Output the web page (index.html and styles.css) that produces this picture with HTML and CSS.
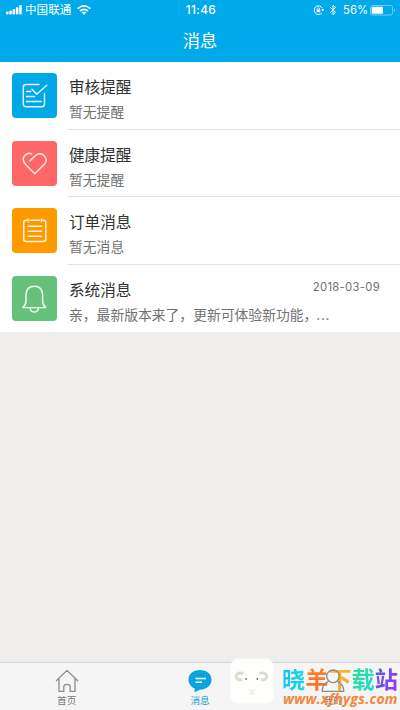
FILE: index.html
```html
<!DOCTYPE html>
<html lang="zh-CN">
<head>
<meta charset="utf-8">
<title>消息</title>
<link rel="stylesheet" href="styles.css">
</head>
<body>
<div class="app">
  <header class="header">
    <div class="status">
      <div class="status-left">
        <svg class="signal" width="16" height="10" viewBox="0 0 16 10" fill="#fff"><rect x="0" y="6.5" width="2.5" height="3" rx=".8"/><rect x="3.3" y="5.5" width="2.5" height="4" rx=".8"/><rect x="6.6" y="4" width="2.5" height="5.5" rx=".8"/><rect x="9.9" y="2.2" width="2.5" height="7.3" rx=".8"/><rect x="13.2" y="0" width="2.5" height="9.5" rx=".8"/></svg>
        <span class="carrier">中国联通</span>
        <svg width="14" height="10" viewBox="0 0 14 10" fill="none" stroke="#fff" stroke-width="1.7"><path d="M.7 3.6Q7-1.8 13.3 3.6M3 6Q7 2.6 11 6"/><path d="M4.7 7.4Q7 5.6 9.3 7.4L7 9.8Z" fill="#fff" stroke="none"/></svg>
      </div>
      <span class="time">11:46</span>
      <div class="status-right">
        <svg width="12" height="10" viewBox="0 0 12 10" fill="none" stroke="#fff"><path d="M8.9 7.8A4.3 4.3 0 1 1 9.3 3.2"/><path d="M8.2 4.1h3L9.7 6.4Z" fill="#fff" stroke="none"/><rect x="3.6" y="4.5" width="3.6" height="2.7" fill="#fff" stroke="none"/><path d="M4.3 4.6V3.4Q5.4 2 6.5 3.4V4.6" stroke-width=".8"/></svg>
        <svg class="bluetooth" width="8" height="12" viewBox="0 0 8 12" fill="none" stroke="#fff"><path d="M1 3.2 6.6 8.4 4 11V1L6.6 3.6 1 8.8"/></svg>
        <span class="percent">56%</span>
        <svg width="26" height="11" viewBox="0 0 26 11"><rect x=".5" y=".5" width="22" height="9.5" rx="2" fill="none" stroke="#6bd0f5"/><rect x="1.7" y="1.7" width="11.3" height="7.1" rx=".8" fill="#fff"/><path d="M24 3.5q2 1.7 0 3.5z" fill="#8bdaf7"/></svg>
      </div>
    </div>
    <h1 class="title">消息</h1>
  </header>

  <main class="list">
    <section class="row">
      <div class="tile blue"><svg width="45" height="45" viewBox="0 0 45 45"><path d="M27 11.5H14Q11.3 11.5 11.3 14.2V31Q11.3 33.7 14 33.7H29.8Q32.5 33.7 32.5 31V20.5M20 16.2 24.7 21.2 34.8 12.3M14.5 18.4H18.8M14.5 23.5H22.5M14.5 28.5H29"/></svg></div>
      <div class="body"><div class="line"><h2>审核提醒</h2></div><p>暂无提醒</p></div>
    </section>
    <section class="row">
      <div class="tile red"><svg width="45" height="45" viewBox="0 0 45 45"><path d="M17.8 20 22.9 15C25.5 12.2 29.3 11.8 32 14.4C35 17.3 34.7 20.8 32.4 23.2L22.8 32.7 13.4 23.2C10.6 20.2 10.7 16.7 13.3 14.1C15.3 12.2 17.7 11.9 19.7 12.8"/></svg></div>
      <div class="body"><div class="line"><h2>健康提醒</h2></div><p>暂无提醒</p></div>
    </section>
    <section class="row">
      <div class="tile orange"><svg width="45" height="45" viewBox="0 0 45 45"><path d="M14.5 12.3H14Q11.7 12.3 11.7 14.6V31Q11.7 33.5 14.2 33.5H31.3Q33.8 33.5 33.8 31V14.6Q33.8 12.3 31.5 12.3H31M18 12.3H27.5M16 11V13.5M29.5 11V13.5M16 18.3H29.5M16 23.2H29.5M16 28.2H29.5"/></svg></div>
      <div class="body"><div class="line"><h2>订单消息</h2></div><p>暂无消息</p></div>
    </section>
    <section class="row">
      <div class="tile green"><svg width="45" height="45" viewBox="0 0 45 45"><path d="M10.8 31.6Q14 29 14 25V18.8Q14.3 10.2 22.2 10.2Q30.3 10.2 30.6 18.8V25Q30.6 29 33.8 31.6ZM18 32Q18.5 36 22.3 36T26.6 32"/></svg></div>
      <div class="body"><div class="line"><h2>系统消息</h2><time>2018-03-09</time></div><p>亲，最新版本来了，更新可体验新功能，<span class="dots">...</span></p></div>
    </section>
  </main>

  <nav class="tabs">
    <div class="tab"><svg width="24" height="24" viewBox="0 0 24 24"><path d="M1 12 12 1.4 23 12M4 9.8V22.4H8.8V18Q8.8 15.4 12 15.4T15.2 18V22.4H20V9.8"/></svg><span>首页</span></div>
    <div class="tab active"><svg width="24" height="24" viewBox="0 0 24 24"><path class="bubble" d="M12 1C5.2 1 .5 5 .5 10.8C.5 15.2 3.4 18.1 6.8 19.6L6.5 23.2 11.8 20.7C18.8 20.5 23.5 16.5 23.5 10.8C23.5 5 18.8 1 12 1Z"/><path class="mark" d="M7.5 9.5H18M7.5 13.3H14"/></svg><span>消息</span></div>
    <div class="tab"><svg class="profile" width="24" height="24" viewBox="0 0 24 24"><circle cx="12" cy="7.3" r="6.3"/><path d="M7.8 12.2Q1.2 15.3 1.2 22.4H22.8Q22.8 15.3 16.2 12.2"/></svg><span>我的</span></div>
  </nav>

  <aside class="watermark">
    <svg class="sheep" width="44" height="46" viewBox="0 0 44 46"><rect x=".5" y=".5" width="43" height="45" rx="8" fill="#fefefd"/><g fill="none" stroke="#dcdcd3" stroke-width="3"><path d="M13.5 15.5Q7 13.5 6.3 18.5Q6.5 22.5 12 21.5M29.5 15.5Q36 13.5 36.7 18.5Q36.5 22.5 31 21.5"/></g><circle cx="16" cy="21" r=".9" fill="#74746c"/><circle cx="27.3" cy="21" r=".9" fill="#74746c"/><path d="M18.5 31.5l3.5 2 3.5-2M22 33.5v1.5M19 35.5q3 1.8 6-.5" fill="none" stroke="#dededb" stroke-width=".8"/></svg>
    <div class="brand"><div class="name"><span class="c1">晓</span><span class="c2">羊</span><span class="c3">下</span><span class="c4">载</span><span class="c5">站</span></div><div class="url">www.xfhygs.com</div></div>
  </aside>
</div>
</body>
</html>
```

FILE: styles.css
```css
* { box-sizing: border-box; }
body { margin: 0; font-family: Inter, "Noto Sans CJK SC", sans-serif; }
svg { display: block; flex: none; }
h1, h2, p { margin: 0; font-weight: 400; }
.app { position: relative; display: flex; flex-direction: column; width: 400px; height: 710px; overflow: hidden; background: #efeeec; }

.header { height: 62px; background: #00aaea; color: #fff; }
.status { display: grid; grid-template-columns: 1fr auto 1fr; align-items: center; height: 20px; padding: 0 4px 0 6px; }
.status-left, .status-right { display: flex; align-items: center; }
.status-right { justify-content: flex-end; }
.carrier { margin: 0 6px 0 3px; font-size: 11.6px; line-height: 20px; }
.time { font-size: 11.8px; font-weight: 500; letter-spacing: .35px; }
.bluetooth { margin: 0 6px 0 4px; }
.percent { margin-right: 2px; font-size: 11.3px; }
.title { height: 42px; font-size: 17.3px; line-height: 41px; text-align: center; }

.list { height: 270px; background: #fff; }
.row { display: flex; height: 67.5px; padding-left: 12px; }
.tile { width: 45px; height: 45px; margin: 11px 11px 0 0; border-radius: 4px; }
.tile path { fill: none; stroke: #fff; stroke-width: 1.45; stroke-linecap: round; stroke-linejoin: round; opacity: .9; }
.blue { background: #00a8e8; }
.red { background: #ff6666; }
.orange { background: #ff9900; }
.green { background: #66c17a; }
.body { flex: 1; padding: 14px 20px 0 1px; border-bottom: 1px solid #e3e3e3; }
.row:last-child .body { border-bottom: 0; }
.line { display: flex; justify-content: space-between; height: 23px; }
h2 { font-size: 15.6px; line-height: 24px; color: #303030; }
p { font-size: 13.8px; line-height: 26px; color: #717171; white-space: nowrap; }
time { font-size: 11.3px; line-height: 16px; letter-spacing: .3px; color: #707070; }
.dots { margin-left: -1px; letter-spacing: .6px; }

.tabs { display: flex; height: 48px; margin-top: auto; border-top: 1px solid #d5d5d5; background: #f5f5f5; }
.tab { flex: 1; display: flex; flex-direction: column; align-items: center; padding-top: 6px; font-size: 9.6px; line-height: 15px; color: #777; }
.tab path, .tab circle { fill: none; stroke: #8c8c8c; stroke-width: 1.3; stroke-linejoin: round; }
.tab .profile { position: relative; z-index: 2; }
.active { color: #149fd6; }
.tab .bubble { fill: #0ba4de; stroke: none; }
.tab .mark { stroke: #fff; stroke-width: 1.6; }

.watermark { position: absolute; left: 230px; top: 658px; display: flex; gap: 8px; }
.brand { padding-top: 7px; }
.name { display: flex; height: 26px; font-size: 23.2px; line-height: 30px; font-weight: 700; }
.name span { height: 30px; background-clip: text; color: transparent; }
.c1 { background-image: linear-gradient(100deg, #16bdf5, #19dfdf); }
.c2 { background-image: linear-gradient(#ff8428, #f56731); }
.c3 { background-image: linear-gradient(#ffb52b, #f6a623); }
.c4 { background-image: linear-gradient(110deg, #32dc9a, #24d6ce); }
.c5 { background-image: linear-gradient(110deg, #5658ef, #a136ee); }
.url { font: italic 700 14px/16px "Open Sans", sans-serif; letter-spacing: .25px; margin-left: 1px; color: #f4863e; white-space: nowrap; }
```
